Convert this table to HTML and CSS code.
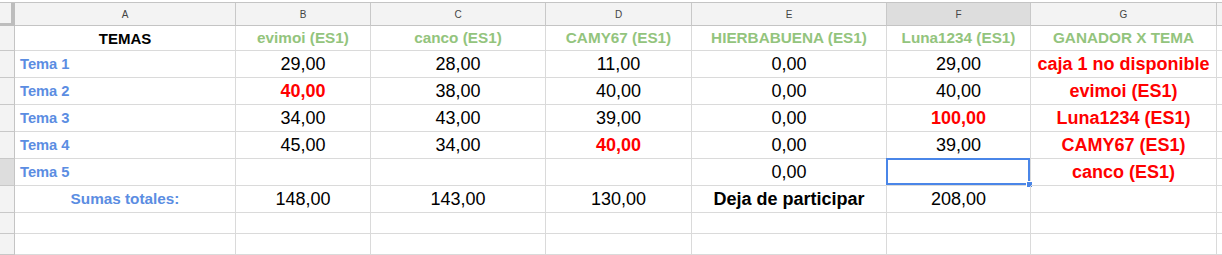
FILE: index.html
```html
<!DOCTYPE html>
<html lang="es">
<head>
<meta charset="utf-8">
<title>Hoja</title>
<link rel="stylesheet" href="styles.css">
</head>
<body>
<div class="sheet">
  <div class="corner"></div>
  <div class="ch">A</div><div class="ch">B</div><div class="ch">C</div><div class="ch">D</div><div class="ch">E</div><div class="ch sel">F</div><div class="ch">G</div><div class="ch fill"></div>

  <div class="rh r-head"></div>
  <div class="c c-center t-black">TEMAS</div>
  <div class="c c-center t-green">evimoi (ES1)</div>
  <div class="c c-center t-green">canco (ES1)</div>
  <div class="c c-center t-green">CAMY67 (ES1)</div>
  <div class="c c-center t-green">HIERBABUENA (ES1)</div>
  <div class="c c-center t-green">Luna1234 (ES1)</div>
  <div class="c c-center t-green">GANADOR X TEMA</div>
  <div class="c fill"></div>

  <div class="rh r-row"></div>
  <div class="c t-blue">Tema 1</div>
  <div class="c c-center num">29,00</div>
  <div class="c c-center num">28,00</div>
  <div class="c c-center num">11,00</div>
  <div class="c c-center num">0,00</div>
  <div class="c c-center num">29,00</div>
  <div class="c c-center t-red">caja 1 no disponible</div>
  <div class="c fill"></div>

  <div class="rh r-row"></div>
  <div class="c t-blue">Tema 2</div>
  <div class="c c-center num t-rednum">40,00</div>
  <div class="c c-center num">38,00</div>
  <div class="c c-center num">40,00</div>
  <div class="c c-center num">0,00</div>
  <div class="c c-center num">40,00</div>
  <div class="c c-center t-red">evimoi (ES1)</div>
  <div class="c fill"></div>

  <div class="rh r-row"></div>
  <div class="c t-blue">Tema 3</div>
  <div class="c c-center num">34,00</div>
  <div class="c c-center num">43,00</div>
  <div class="c c-center num">39,00</div>
  <div class="c c-center num">0,00</div>
  <div class="c c-center num t-rednum">100,00</div>
  <div class="c c-center t-red">Luna1234 (ES1)</div>
  <div class="c fill"></div>

  <div class="rh r-row"></div>
  <div class="c t-blue">Tema 4</div>
  <div class="c c-center num">45,00</div>
  <div class="c c-center num">34,00</div>
  <div class="c c-center num t-rednum">40,00</div>
  <div class="c c-center num">0,00</div>
  <div class="c c-center num">39,00</div>
  <div class="c c-center t-red">CAMY67 (ES1)</div>
  <div class="c fill"></div>

  <div class="rh r-row sel"></div>
  <div class="c t-blue">Tema 5</div>
  <div class="c"></div>
  <div class="c"></div>
  <div class="c"></div>
  <div class="c c-center num">0,00</div>
  <div class="c active"><span class="selbox"><span class="handle"></span></span></div>
  <div class="c c-center t-red">canco (ES1)</div>
  <div class="c fill"></div>

  <div class="rh r-row"></div>
  <div class="c c-center t-blue t-sum">Sumas totales:</div>
  <div class="c c-center num">148,00</div>
  <div class="c c-center num">143,00</div>
  <div class="c c-center num">130,00</div>
  <div class="c c-center t-bold">Deja de participar</div>
  <div class="c c-center num">208,00</div>
  <div class="c"></div>
  <div class="c fill"></div>

  <div class="rh r-empty"></div>
  <div class="c"></div><div class="c"></div><div class="c"></div><div class="c"></div><div class="c"></div><div class="c"></div><div class="c"></div><div class="c fill"></div>

  <div class="rh r-empty"></div>
  <div class="c"></div><div class="c"></div><div class="c"></div><div class="c"></div><div class="c"></div><div class="c"></div><div class="c"></div><div class="c fill"></div>
</div>
</body>
</html>
```

FILE: styles.css
```css
* { box-sizing: border-box; }
html, body { margin: 0; padding: 0; background: #ffffff; }
body { font-family: "Liberation Sans", Arial, sans-serif; }

.sheet {
  margin-top: 2px;
  border-top: 1px solid #c4c4c4;
  display: grid;
  grid-template-columns: 15px 221px 135px 175px 146px 195px 144px 186px 1fr;
  grid-template-rows: 23px 25px 27px 27px 27px 27px 27px 27px 21px 21px;
  width: 1222px;
}

.corner {
  background: #f3f3f3;
  border-right: 4px solid #bdbdbd;
  border-bottom: 3px solid #bdbdbd;
}

.ch {
  background: #f3f3f3;
  border-right: 1px solid #c8c8c8;
  border-bottom: 1px solid #c4c4c4;
  font-size: 10px;
  color: #444;
  display: flex;
  align-items: center;
  justify-content: center;
  padding-top: 1px;
}
.ch.sel { background: #dddddd; }
.ch.fill { border-right: none; }

.rh {
  background: #f3f3f3;
  border-right: 1px solid #c4c4c4;
  border-bottom: 1px solid #c8c8c8;
}
.rh.sel { background: #dddddd; }

.c {
  position: relative;
  border-right: 1px solid #dadada;
  border-bottom: 1px solid #dadada;
  display: flex;
  align-items: center;
  padding: 0 5px;
  white-space: nowrap;
  color: #000;
}
.c.fill { border-right: none; }
.c-center { justify-content: center; }

.num { font-size: 18px; }
.t-black { font-weight: bold; font-size: 15px; color: #000; }
.t-green { font-weight: bold; font-size: 15.3px; color: #93c47d; }
.t-blue { font-weight: bold; font-size: 14.7px; color: #5b8de2; }
.t-sum { font-size: 15.3px; }
.t-red { font-weight: bold; font-size: 18px; color: #ff0000; }
.t-rednum { font-weight: bold; color: #ff0000; }
.t-bold { font-weight: bold; font-size: 18px; color: #000; }

.selbox {
  position: absolute;
  left: -1px;
  top: -1px;
  right: 0;
  bottom: 0;
  border: 2px solid #4a86e8;
}
.handle {
  position: absolute;
  right: -5px;
  bottom: -5px;
  width: 7px;
  height: 7px;
  background: #4a86e8;
  border: 1px solid #ffffff;
}
```
